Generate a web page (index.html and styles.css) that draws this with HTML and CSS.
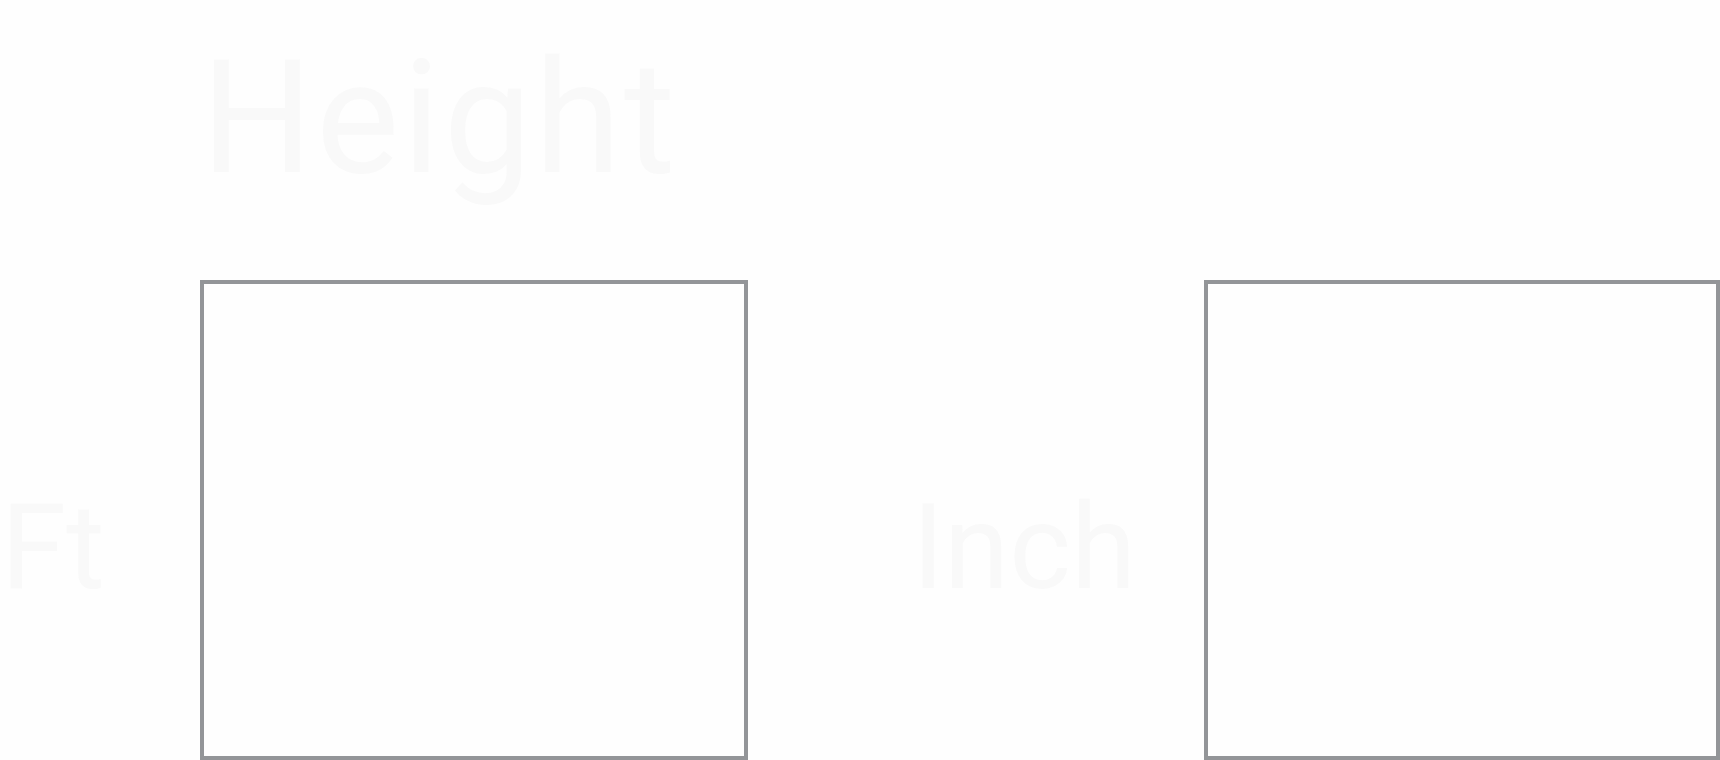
FILE: index.html
```html
<!DOCTYPE html>
<html lang="en">
<head>
<meta charset="utf-8">
<title>Height</title>
<link rel="stylesheet" href="styles.css">
</head>
<body>
<main class="page">
  <h1 class="title">Height</h1>
  <div class="row">
    <label class="label label-ft" for="ft">Ft</label>
    <input class="field field-ft" id="ft" type="text">
    <label class="label label-inch" for="inch">Inch</label>
    <input class="field field-inch" id="inch" type="text">
  </div>
</main>
</body>
</html>
```
FILE: styles.css
```css
html, body {
  margin: 0;
  padding: 0;
  background: #fefefe;
  overflow: hidden;
}

.page {
  width: 1720px;
  height: 760px;
  font-family: Roboto, "Liberation Sans", sans-serif;
  color: #f9f9f9;
}

.title {
  margin: 0;
  padding: 40px 0 0 201px;
  font-size: 157px;
  font-weight: 400;
  line-height: 1;
  letter-spacing: 3px;
  height: 157px;
}

.row {
  display: flex;
  align-items: flex-start;
  margin-top: 83px;
}

.label {
  font-size: 118px;
  line-height: 1;
  margin-top: 209px;
  color: #f9f9f9;
}

.label-ft {
  width: 199px;
  padding-left: 1px;
}

.label-inch {
  width: 292px;
  margin-left: 164px;
}

.field {
  box-sizing: border-box;
  height: 480px;
  margin: 0;
  padding: 0;
  border: 4px solid #939598;
  border-radius: 0;
  background: #fefefe;
  outline: none;
}

.field-ft {
  width: 548px;
}

.field-inch {
  width: 516px;
}
```
